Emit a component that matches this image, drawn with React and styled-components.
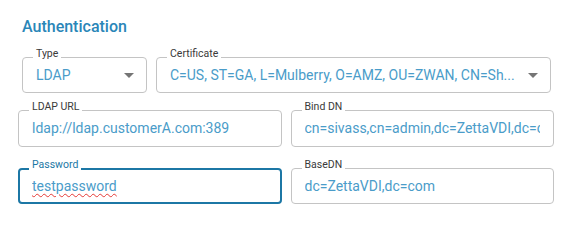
import React from "react";
import styled, { createGlobalStyle } from "styled-components";

const Global = createGlobalStyle`
  html, body { margin: 0; padding: 0; background: #fff; }
  body { font-family: Roboto, "Liberation Sans", sans-serif; }
`;

const Page = styled.div`
  width: 569px;
  height: 241px;
  box-sizing: border-box;
  padding-top: 18px;
`;

const Title = styled.h2`
  margin: 0 0 20px 22px;
  font-size: 16px;
  font-weight: 500;
  line-height: 18.75px;
  color: #2a86b8;
`;

const Row = styled.div`
  display: grid;
  grid-template-columns: ${(p) => p.$cols};
  column-gap: 9px;
  padding: ${(p) => p.$pad};
  margin-bottom: ${(p) => p.$mb || 0}px;
`;

const Field = styled.div`
  position: relative;
  box-sizing: border-box;
  height: ${(p) => p.$h}px;
  border: ${(p) => (p.$focused ? "2px solid #1c77a5" : "1px solid #c4c4c4")};
  border-radius: 4px;
  display: flex;
  align-items: center;
  padding-left: ${(p) => (p.$focused ? 12 : 13)}px;
  padding-right: ${(p) => (p.$select ? 5 : 13)}px;
  min-width: 0;
`;

const Label = styled.span`
  position: absolute;
  left: ${(p) => (p.$focused ? 9 : 10)}px;
  top: ${(p) => (p.$focused ? -11 : -10)}px;
  padding: 0 3px;
  background: #fff;
  font-size: 10.5px;
  line-height: 12px;
  color: ${(p) => (p.$focused ? "#1c77a5" : "#3a3a3a")};
  white-space: nowrap;
`;

const Value = styled.div`
  flex: 1;
  min-width: 0;
  overflow: hidden;
  white-space: nowrap;
  font-size: 14px;
  line-height: 16px;
  padding: 4px 0;
  color: #4a9cc9;
  margin-right: ${(p) => (p.$select ? 3 : 0)}px;
`;

const Spell = styled.span`
  text-decoration-line: underline;
  text-decoration-style: wavy;
  text-decoration-color: #e53935;
  text-decoration-thickness: 1px;
  text-underline-offset: 2px;
`;

const Arrow = styled.svg`
  flex: none;
  width: 24px;
  height: 24px;
  fill: #757575;
`;

const DropArrow = () => (
  <Arrow viewBox="0 0 24 24">
    <path d="M7 10l5 5 5-5z" />
  </Arrow>
);

function TextField({ label, children, focused, h = 37, select }) {
  return (
    <Field $h={h} $focused={focused} $select={select}>
      <Label $focused={focused}>{label}</Label>
      <Value $select={select}>{children}</Value>
      {select && <DropArrow />}
    </Field>
  );
}

export default function App() {
  return (
    <>
      <Global />
      <Page>
        <Title>Authentication</Title>
        <Row $cols="125px 1fr" $pad="0 18px 0 22px" $mb={17}>
          <TextField label="Type" h={36} select>
            LDAP
          </TextField>
          <TextField label="Certificate" h={36} select>
            C=US, ST=GA, L=Mulberry, O=AMZ, OU=ZWAN, CN=Sh...
          </TextField>
        </Row>
        <Row $cols="1fr 1fr" $pad="0 15px 0 18px" $mb={21}>
          <TextField label="LDAP URL">ldap://ldap.customerA.com:389</TextField>
          <TextField label="Bind DN">
            cn=sivass,cn=admin,dc=ZettaVDI,dc=com
          </TextField>
        </Row>
        <Row $cols="1fr 1fr" $pad="0 15px 0 18px">
          <TextField label="Password" focused h={36}>
            <Spell>testpassword</Spell>
          </TextField>
          <TextField label="BaseDN" h={36}>
            dc=ZettaVDI,dc=com
          </TextField>
        </Row>
      </Page>
    </>
  );
}
